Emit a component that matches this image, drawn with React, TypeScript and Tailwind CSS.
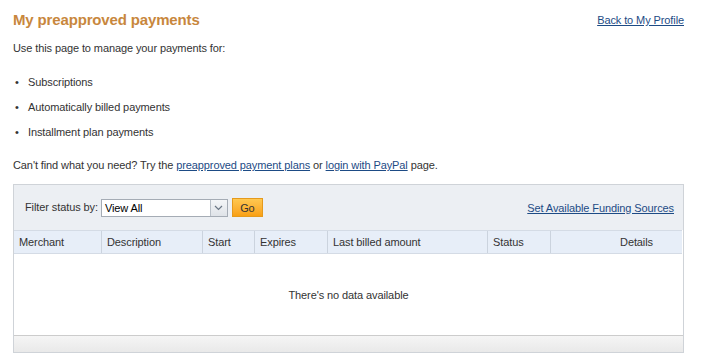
export default function App() {
  const cols = [
    { label: "Merchant", w: "w-[88px]" },
    { label: "Description", w: "w-[101px]" },
    { label: "Start", w: "w-[52px]" },
    { label: "Expires", w: "w-[73px]" },
    { label: "Last billed amount", w: "w-[160px]" },
    { label: "Status", w: "w-[63px]" },
  ];
  return (
    <div className="h-[361px] w-[707px] bg-white font-['Liberation_Sans',Arial,sans-serif] text-[11px] tracking-[-0.1px] text-[#333]">
      <div className="px-[13px] pt-[11px]">
        <div className="flex items-start justify-between">
          <h1 className="text-[15px] font-bold leading-[18px] tracking-[-0.15px] text-[#c8873d]">My preapproved payments</h1>
          <a href="#" className="mr-[10px] mt-[2px] leading-[14px] text-[#1d4b85] underline">Back to My Profile</a>
        </div>
        <p className="mt-[12px] leading-[14px]">Use this page to manage your payments for:</p>
        <ul className="mt-[20px]">
          <li className="flex h-[25px] items-start leading-[14px]"><span className="w-[15px] pl-[2px]">•</span>Subscriptions</li>
          <li className="flex h-[25px] items-start leading-[14px]"><span className="w-[15px] pl-[2px]">•</span>Automatically billed payments</li>
          <li className="flex h-[25px] items-start leading-[14px]"><span className="w-[15px] pl-[2px]">•</span>Installment plan payments</li>
        </ul>
        <p className="mt-[8px] leading-[14px]">
          Can't find what you need? Try the{" "}
          <a href="#" className="text-[#1d4b85] underline">preapproved payment plans</a> or{" "}
          <a href="#" className="text-[#1d4b85] underline">login with PayPal</a> page.
        </p>

        <div className="mt-[12px] w-[671px] border border-[#cfd3d8]">
          <div className="flex h-[45px] items-center justify-between bg-[#eceff3] pl-[11px] pr-[9px]">
            <div className="flex items-center">
              <span className="mr-[3px] text-[#333]">Filter status by:</span>
              <div className="flex h-[18px] w-[127px] items-center border border-[#a5acb5] bg-white">
                <span className="flex-1 pl-[3px] leading-[14px] text-[#000]">View All</span>
                <span className="flex h-[16px] w-[17px] items-center justify-center border-l border-[#b9c0c8] bg-gradient-to-b from-[#f4f6f8] to-[#dfe3e8]">
                  <svg width="9" height="6" viewBox="0 0 9 6"><path d="M1 1 L4.5 4.5 L8 1" fill="none" stroke="#6b7785" strokeWidth="1.2" /></svg>
                </span>
              </div>
              <button className="ml-[4px] h-[19px] w-[31px] border border-[#e59a1c] bg-gradient-to-b from-[#ffc850] to-[#f9a010] text-[11px] leading-[14px] text-[#333]">Go</button>
            </div>
            <a href="#" className="leading-[14px] text-[#1d4b85] underline">Set Available Funding Sources</a>
          </div>
          <div className="mr-[1px] flex h-[24px] border-y border-[#d4dbe5] bg-[#e7eef8]">
            {cols.map((c) => (
              <div key={c.label} className={`${c.w} flex items-center border-r border-[#cbd3de] pl-[5px] leading-[14px] text-[#333]`}>
                {c.label}
              </div>
            ))}
            <div className="flex flex-1 items-center justify-center pl-[40px] leading-[14px] text-[#333]">Details</div>
          </div>
          <div className="flex h-[81px] items-center justify-center bg-white leading-[14px] text-[#333]">
            There's no data available
          </div>
          <div className="h-[17px] border-t border-[#cccccc] bg-gradient-to-b from-[#f5f5f5] to-[#e9e9e9]" />
        </div>
      </div>
    </div>
  );
}
